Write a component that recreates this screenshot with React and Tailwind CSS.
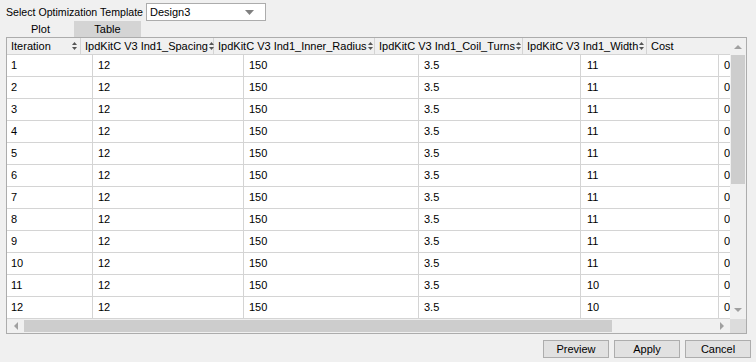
import React from "react";

const headers = [
  { label: "Iteration", w: "w-[74px]" },
  { label: "IpdKitC V3 Ind1_Spacing", w: "w-[133px]" },
  { label: "IpdKitC V3 Ind1_Inner_Radius", w: "w-[161px]" },
  { label: "IpdKitC V3 Ind1_Coil_Turns", w: "w-[148px]" },
  { label: "IpdKitC V3 Ind1_Width", w: "w-[124px]" },
];

const colW = ["w-[86px] pl-[4px]", "w-[151px] pl-[5px]", "w-[175px] pl-[5px]", "w-[162px] pl-[5px]", "w-[138px] pl-[6px]"];

const rows = Array.from({ length: 12 }, (_, i) => [
  String(i + 1),
  "12",
  "150",
  "3.5",
  i >= 10 ? "10" : "11",
  "0",
]);

const SortIcon = () => (
  <svg width="5" height="8" viewBox="0 0 5 8" className="shrink-0">
    <path d="M2.5 0 L5 3 L0 3 Z" fill="#555" />
    <path d="M0 5 L5 5 L2.5 8 Z" fill="#555" />
  </svg>
);

const Arrow = ({ dir }) => {
  const d = {
    up: "M0 4 L4 0 L8 4 Z",
    down: "M0 0 L8 0 L4 4 Z",
    left: "M4 0 L4 8 L0 4 Z",
    right: "M0 0 L4 4 L0 8 Z",
  }[dir];
  const vert = dir === "up" || dir === "down";
  return (
    <svg width={vert ? 8 : 4} height={vert ? 4 : 8} viewBox={vert ? "0 0 8 4" : "0 0 4 8"}>
      <path d={d} fill="#a0a0a0" />
    </svg>
  );
};

export default function App() {
  return (
    <div
      className="w-[756px] h-[362px] bg-[#f0f0f0] text-[11px] text-black overflow-hidden"
      style={{ fontFamily: '"Liberation Sans", Arial, sans-serif' }}
    >
      {/* template selector */}
      <div className="flex items-center pl-[6px] pt-[3px] h-[21px]">
        <span className="leading-none w-[139px] whitespace-nowrap text-[10.6px]">Select Optimization Template</span>
        <div className="ml-[1px] w-[120px] h-[18px] bg-white border border-[#acacac] flex items-center justify-between pl-[3px] pr-[11px]">
          <span>Design3</span>
          <svg width="9" height="5" viewBox="0 0 9 5">
            <path d="M0 0 L9 0 L4.5 5 Z" fill="#808080" />
          </svg>
        </div>
      </div>

      {/* tabs */}
      <div className="flex pl-[7px] h-[16px]">
        <div className="w-[67px] flex items-center justify-center">Plot</div>
        <div className="w-[67px] flex items-center justify-center bg-[#d4d4d4]">Table</div>
      </div>

      {/* table frame */}
      <div className="ml-[6px] w-[741px] h-[297px] border border-[#acacac] flex flex-col">
        <div className="flex h-[281px]">
          <div className="w-[723px] flex flex-col overflow-hidden">
            {/* header */}
            <div className="flex h-[17px] border-b border-[#d4d4d4] bg-[#f0f0f0] shrink-0">
              {headers.map((h) => (
                <div
                  key={h.label}
                  className={`${h.w} shrink-0 border-r border-[#d4d4d4] flex items-center pl-[4px] pr-[3px] whitespace-nowrap ${
                    h.label === "Iteration" ? "justify-between" : "gap-[1px]"
                  }`}
                >
                  <span>{h.label}</span>
                  <SortIcon />
                </div>
              ))}
              <div className="flex-1 flex items-center pl-[4px]">Cost</div>
            </div>
            {/* body */}
            <div className="flex flex-col bg-white">
              {rows.map((r, i) => (
                <div key={i} className="flex h-[22px] border-b border-[#d4d4d4] shrink-0">
                  {r.slice(0, 5).map((v, j) => (
                    <div key={j} className={`${colW[j]} shrink-0 border-r border-[#d4d4d4] flex items-center`}>
                      {v}
                    </div>
                  ))}
                  <div className="flex-1 flex items-center pl-[5px]">{r[5]}</div>
                </div>
              ))}
            </div>
          </div>
          {/* vertical scrollbar */}
          <div className="w-[16px] flex flex-col bg-[#f0f0f0]">
            <div className="h-[17px] flex items-center justify-center">
              <Arrow dir="up" />
            </div>
            <div className="mx-[1px] h-[129px] bg-[#cdcdcd]" />
            <div className="flex-1" />
            <div className="h-[18px] flex items-center justify-center">
              <Arrow dir="down" />
            </div>
          </div>
        </div>
        {/* horizontal scrollbar */}
        <div className="flex h-[14px]">
          <div className="w-[723px] flex items-center bg-[#f0f0f0]">
            <div className="w-[17px] flex justify-center">
              <Arrow dir="left" />
            </div>
            <div className="w-[588px] h-[12px] bg-[#cdcdcd]" />
            <div className="flex-1" />
            <div className="w-[17px] flex justify-center">
              <Arrow dir="right" />
            </div>
          </div>
          <div className="flex-1 bg-[#dcdcdc]" />
        </div>
      </div>

      {/* buttons */}
      <div className="flex justify-end gap-[5px] pr-[5px] pt-[6px]">
        {["Preview", "Apply", "Cancel"].map((b) => (
          <button
            key={b}
            className="w-[66px] h-[18px] bg-[#e1e1e1] border border-[#adadad] flex items-center justify-center text-[11px]"
          >
            {b}
          </button>
        ))}
      </div>
    </div>
  );
}
